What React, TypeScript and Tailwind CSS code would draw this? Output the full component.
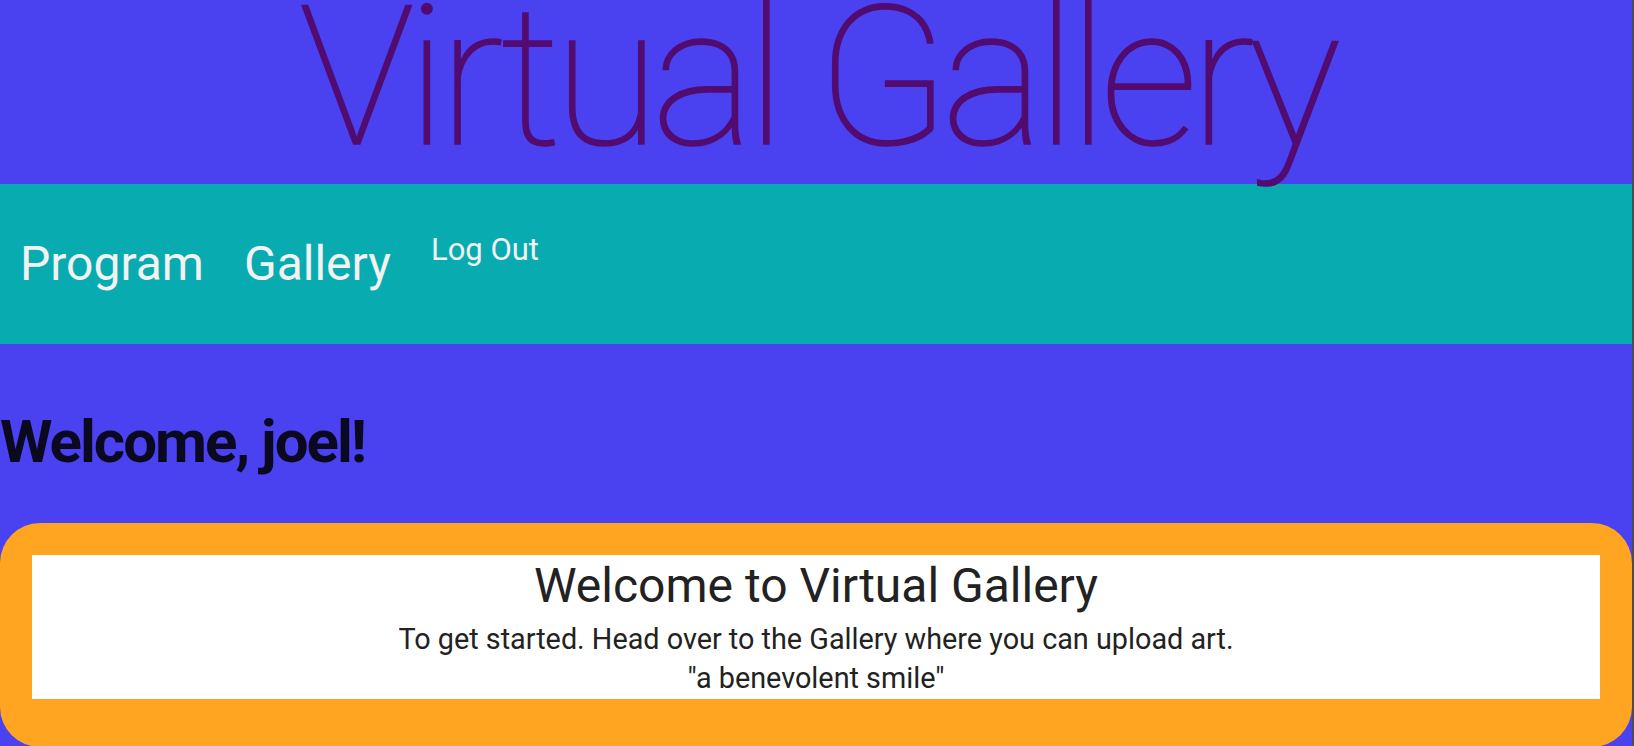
export default function App() {
  return (
    <div className="min-h-screen w-full bg-[#4a42f0] border-r-2 border-[#4d4d4d] font-['Roboto','Liberation_Sans',sans-serif]">
      {/* title banner */}
      <header className="h-[184px] text-center">
        <h1 className="text-[194px] font-thin leading-[155px] tracking-[-8px] text-[#520c70] [-webkit-text-stroke:1.5px_#520c70]">
          Virtual Gallery
        </h1>
      </header>

      {/* nav */}
      <nav className="h-[160px] bg-[#08acb0] flex items-start pt-[48px] pl-[20px] gap-[40px] text-[#f2f2f2]">
        <a className="pt-[4px] text-[48px] leading-[56px]">Program</a>
        <a className="pt-[4px] text-[48px] leading-[56px]">Gallery</a>
        <button className="text-[31px] leading-[36px]">Log Out</button>
      </nav>

      <h2 className="mt-[63px] text-[60px] font-bold leading-[70px] tracking-[-2px] text-[#0a0920]">Welcome, joel!</h2>

      {/* welcome card */}
      <section className="mt-[46px] rounded-[40px] bg-[#ffa521] px-8 pt-8 pb-12">
        <div className="bg-white pt-[3px] pb-[1px] text-center text-[#222222]">
          <h3 className="text-[48px] leading-[56px]">Welcome to Virtual Gallery</h3>
          <p className="mt-[6px] text-[28.8px] leading-[39px]">
            To get started. Head over to the Gallery where you can upload art.
          </p>
          <p className="text-[28.8px] leading-[39px]">"a benevolent smile"</p>
        </div>
      </section>
    </div>
  );
}
